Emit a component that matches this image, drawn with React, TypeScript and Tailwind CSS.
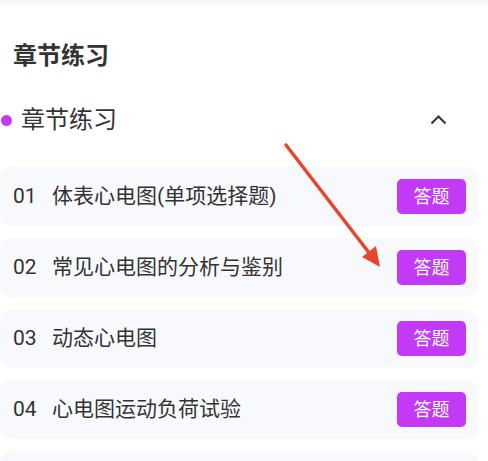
import React from "react";

const items = [
  { no: "01", title: "体表心电图(单项选择题)" },
  { no: "02", title: "常见心电图的分析与鉴别" },
  { no: "03", title: "动态心电图" },
  { no: "04", title: "心电图运动负荷试验" },
  { no: "05", title: "" },
];

const font = { fontFamily: '"Roboto", "Noto Sans CJK SC", sans-serif' };

export default function App() {
  return (
    <div
      className="relative w-[488px] h-[461px] overflow-hidden bg-white text-[#333]"
      style={font}
    >
      <div className="h-[5px] bg-[#f5f8fc]" />
      <div className="mt-[35px] pl-[13px] h-[32px] leading-[32px] text-[24px] font-bold text-[#333]">
        章节练习
      </div>
      <div className="mt-[32px] h-[32px] flex items-center">
        <span className="ml-[1px] w-[11px] h-[11px] rounded-full bg-[#c23af6]" />
        <span className="ml-[9px] text-[24px] leading-[32px] text-[#333]">章节练习</span>
        <span className="ml-auto mr-[41px] flex items-center">
          <svg width="17" height="10" viewBox="0 0 17 10" fill="none">
            <path d="M1.5 8.5 L8.5 1.5 L15.5 8.5" stroke="#333" strokeWidth="2" />
          </svg>
        </span>
      </div>
      <div className="mt-[31px] flex flex-col gap-[12px]">
        {items.map((it) => (
          <div
            key={it.no}
            className="w-[478px] h-[59px] rounded-[12px] bg-[#f8f9fd] flex items-center pl-[13px] pr-[12px]"
          >
            {it.title && (
              <>
                <span className="w-[39px] text-[21px] leading-none text-[#333]">{it.no}</span>
                <span className="text-[21px] leading-none text-[#333]">{it.title}</span>
                <span className="ml-auto w-[69px] h-[35px] rounded-[5px] bg-[#c23af6] text-white text-[18px] flex items-center justify-center">
                  答题
                </span>
              </>
            )}
          </div>
        ))}
      </div>
      <svg
        className="absolute left-0 top-0 pointer-events-none"
        width="488"
        height="461"
        viewBox="0 0 488 461"
      >
        <line x1="286" y1="145" x2="370" y2="254" stroke="#e8452c" strokeWidth="3.5" strokeLinecap="round" />
        <polygon points="380,267 362,257 376,246" fill="#e8452c" />
      </svg>
    </div>
  );
}
